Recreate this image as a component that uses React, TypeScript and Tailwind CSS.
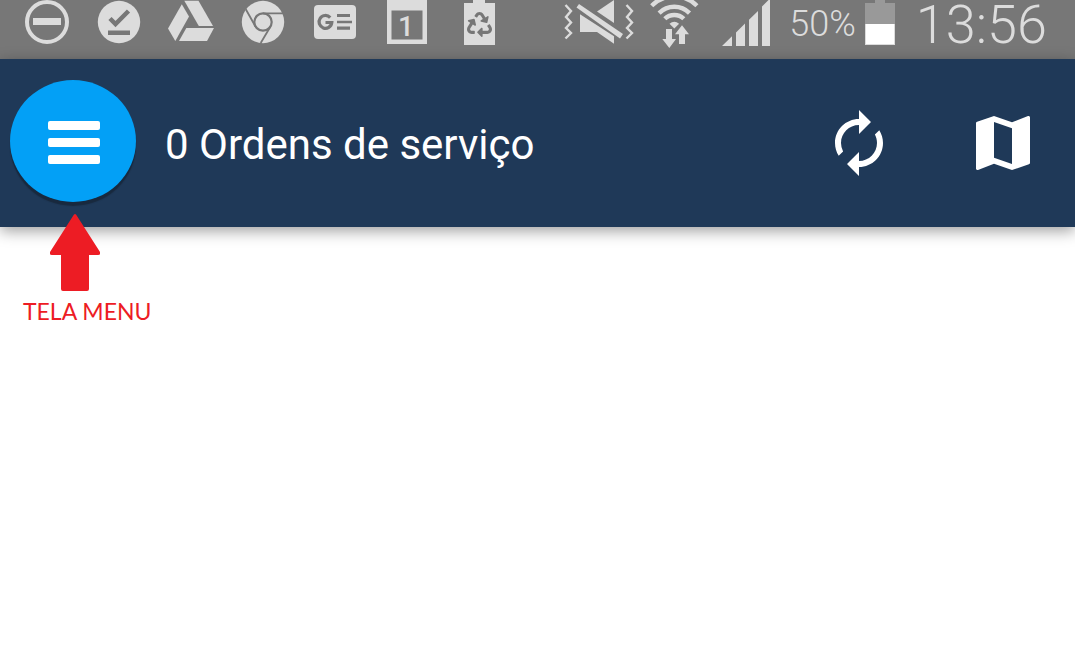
import React from "react";
import { FaRecycle } from "react-icons/fa";
import { MdAutorenew, MdMap } from "react-icons/md";

const LIGHT = "#dcdcdc";
const BAR = "#777777";

function Slot({ x, label, children }: { x: number; label: string; children: React.ReactNode }) {
  return (
    <svg role="img" aria-label={label} className="h-[59px] w-[72px] shrink-0" viewBox={`${x} 0 72 59`} fill={LIGHT}>
      {children}
    </svg>
  );
}

function StatusBar() {
  return (
    <div className="flex h-[59px] items-start bg-[#777777] pl-[11px] pr-7 font-['Roboto',sans-serif] text-[#dcdcdc]">
      <div className="flex">
        <Slot x={11} label="Não perturbe">
          <circle cx="47" cy="22" r="20" fill="none" stroke={LIGHT} strokeWidth="4" />
          <rect x="33" y="18" width="28" height="7" />
        </Slot>
        <Slot x={83} label="Concluído">
          <circle cx="119" cy="22" r="21.2" />
          <path d="M110 18.5l5.5 5.5L128.5 11" fill="none" stroke={BAR} strokeWidth="4.5" />
          <rect x="108" y="30.5" width="22" height="4.5" fill={BAR} />
        </Slot>
        <Slot x={155} label="Drive">
          <path d="M168 28.5L181.8 4.2L189 16.5L175.3 41Z" />
          <path d="M184.3 .7H198.5L213 26H198.8Z" />
          <path d="M186.3 28H214L207 41H179Z" />
        </Slot>
        <Slot x={227} label="Chrome">
          <circle cx="263" cy="22" r="21.2" />
          <circle cx="263" cy="22" r="8.7" fill="none" stroke={BAR} strokeWidth="2.2" />
          <path d="M263 13.3H283M255.5 26.5L245.8 9.3M270.5 26.5L260.7 43" fill="none" stroke={BAR} strokeWidth="1.8" />
        </Slot>
        <Slot x={299} label="Notícias">
          <rect x="314" y="5" width="42" height="34" rx="4" />
          <path d="M330.2 17.6A6.4 6.4 0 1 0 331.8 22.5H325.5" fill="none" stroke={BAR} strokeWidth="3.2" />
          <path d="M337 14H350V17H337ZM337 20.7H352V23.3H337ZM337 26.5H350V29.8H337Z" fill={BAR} />
        </Slot>
        <Slot x={371} label="Calendário">
          <path d="M387 0H427V44H387Z" />
          <path d="M391.5 10.5H422.5V39.5H391.5Z" fill={BAR} />
          <text x="406" y="36" textAnchor="middle" className="font-['Roboto',sans-serif] text-[28px] font-medium">1</text>
        </Slot>
        <Slot x={443} label="Economia de bateria">
          <path d="M473 0H485V3H495V45H464V3H473Z" />
          <FaRecycle x={467} y={12} size={25} color={BAR} />
        </Slot>
      </div>

      <div className="ml-auto flex items-start">
        <svg role="img" aria-label="Som desativado" className="h-[59px] w-[72px]" viewBox="564 0 72 59" fill={LIGHT}>
          <path d="M566.5 5L572 11L567 17L572 22.5L567 28L572 33L566.5 38.5M627.5 5L633 11L628 17L633 22.5L628 28L633 33L627.5 38.5" fill="none" stroke={LIGHT} strokeWidth="2.4" />
          <path d="M615 0V23L598 11.5Z" />
          <path d="M580 4L624 34L621 38.5L577.5 7.5Z" />
          <path d="M581 14.3L615 36.3V43.7L598 32H581Z" />
        </svg>
        <svg role="img" aria-label="Wi-Fi" className="ml-3 h-[59px] w-[56px]" viewBox="648 0 56 59" fill={LIGHT}>
          <path d="M665.8 18.8A13.6 13.6 0 0 1 684.8 18.8M660.1 13.1A21.5 21.5 0 0 1 690.5 13.1M652.7 5.7A32 32 0 0 1 697.9 5.7" fill="none" stroke={LIGHT} strokeWidth="4.4" />
          <path d="M675.3 28.5L670.5 23.7Q675.3 20 680.1 23.7Z" />
          <path d="M667 29H673V39H677L670.3 48L663.3 39H667Z" />
          <path d="M683 25.3L690 34.3H686V44H680V34.3H676Z" />
        </svg>
        <svg role="img" aria-label="Sinal" className="ml-4 h-[59px] w-[54px]" viewBox="720 0 54 59" fill={LIGHT}>
          <path d="M723 46L733 36.3V46ZM737 46V32.5L746 23.5V46ZM750 46V19.8L759 11V46ZM763 46V6.5L771 -1.5V46Z" />
        </svg>
        <span className="ml-4 pt-1 text-4xl leading-10 font-light">50%</span>
        <svg role="img" aria-label="Bateria" className="ml-1.5 h-[59px] w-[36px]" viewBox="862 0 36 59">
          <path d="M875 0H885V3H895V45H865V3H875Z" fill="#999999" />
          <path d="M865 24H895V45H865Z" fill={LIGHT} />
          <path d="M866 24H894V44H866Z" fill="#ffffff" />
        </svg>
        <time className="ml-[18px] text-[54px] leading-[50px] font-light">13:56</time>
      </div>
    </div>
  );
}

function Header() {
  return (
    <header className="flex h-[168px] items-center bg-[#1f3958] pr-9 pl-2.5 font-['Roboto',sans-serif] text-white shadow-[0_4px_14px_rgba(0,0,0,0.38)]">
      <button
        type="button"
        aria-label="Menu"
        className="mb-1 flex h-[122px] w-[126px] shrink-0 items-center justify-center rounded-[50%] bg-[#03a0f6] shadow-[0_4px_1px_rgba(22,38,56,0.8)]"
      >
        <span className="flex flex-col gap-2 pt-[3px] pl-0.5">
          <span className="h-[9px] w-[52px] rounded-xs bg-white" />
          <span className="h-[9px] w-[52px] rounded-xs bg-white" />
          <span className="h-[9px] w-[52px] rounded-xs bg-white" />
        </span>
      </button>
      <h1 className="ml-[29px] pt-1 text-[42px] leading-[48px] font-normal whitespace-nowrap">0 Ordens de serviço</h1>
      <div className="ml-auto flex gap-[72px]">
        <button type="button" aria-label="Atualizar">
          <MdAutorenew size={72} />
        </button>
        <button type="button" aria-label="Mapa">
          <MdMap size={72} />
        </button>
      </div>
    </header>
  );
}

export default function App() {
  return (
    <div className="min-h-screen bg-white">
      <StatusBar />
      <Header />
      <main className="flex">
        <figure className="relative -mt-[13px] flex flex-col items-center pl-[23px] text-[#ed1c24]">
          <svg aria-hidden="true" className="mr-6 h-[77px] w-[50px]" viewBox="0 0 50 77" fill="currentColor">
            <path d="M25 0Q26 0 27 2L50 38V40Q50 41 48 41H39V75Q39 77 37 77H13Q11 77 11 75V41H2Q0 41 0 40V38L23 2Q24 0 25 0Z" />
          </svg>
          <figcaption className="mt-1 font-['Lato',sans-serif] text-[23px] leading-8">TELA MENU</figcaption>
        </figure>
      </main>
    </div>
  );
}
